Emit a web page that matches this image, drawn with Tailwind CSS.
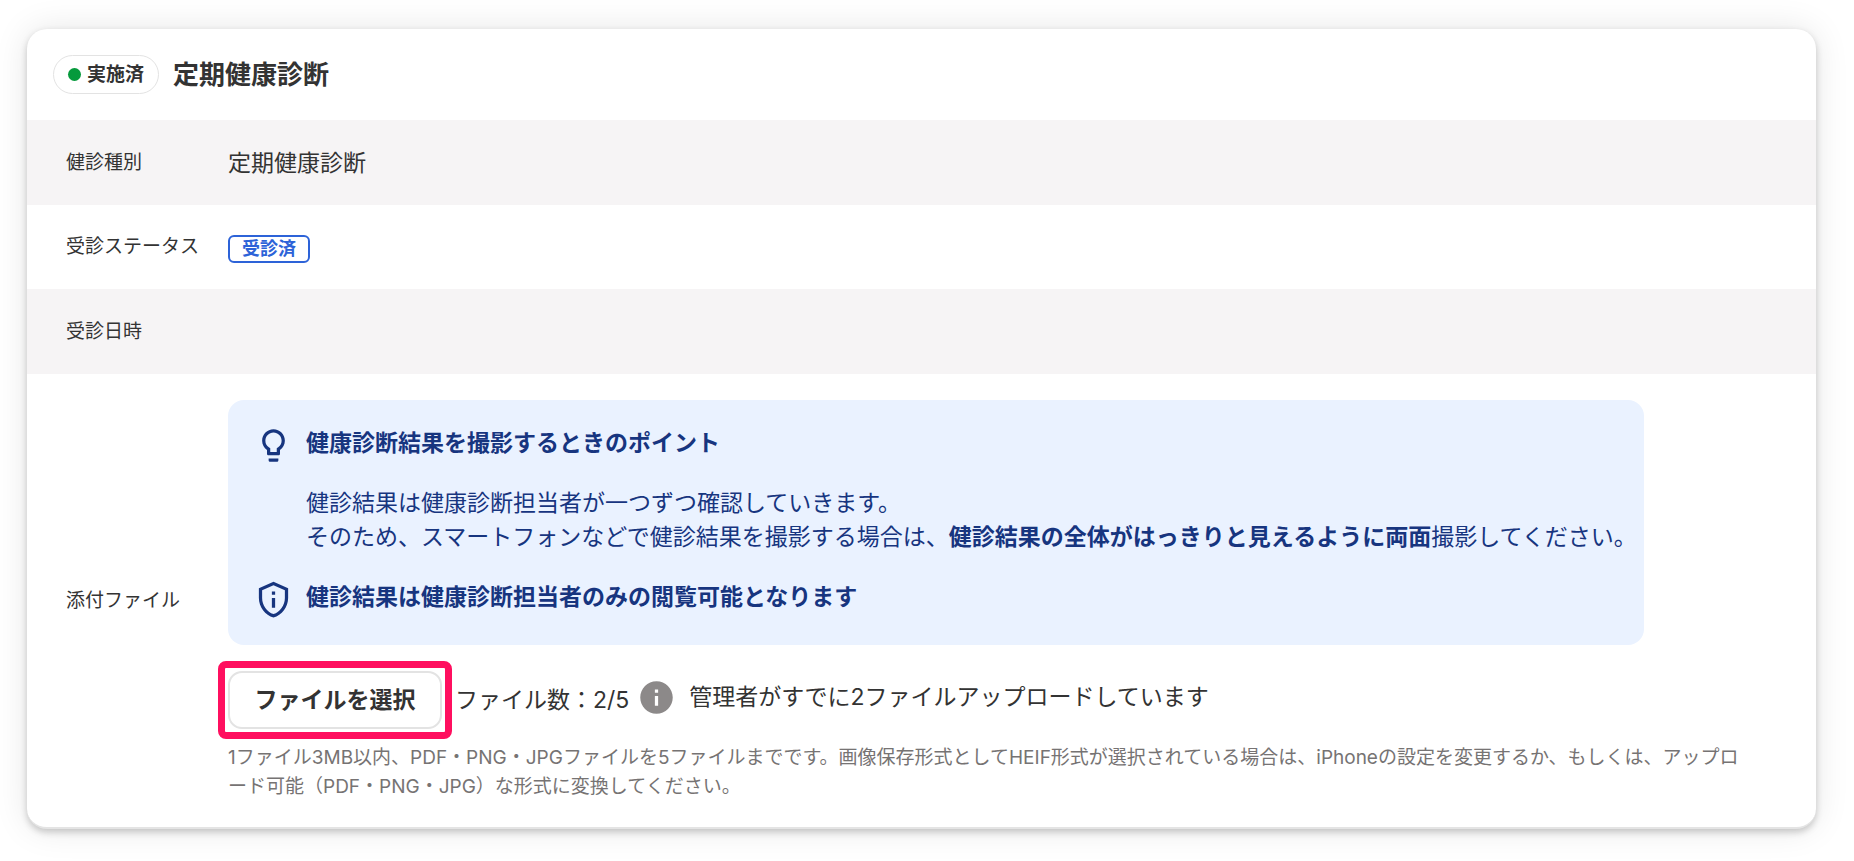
<!DOCTYPE html>
<html lang="ja">
<head>
    <meta charset="UTF-8">
    <meta name="viewport" content="width=device-width, initial-scale=1.0">
    <title>定期健康診断</title>
    <script src="https://cdn.jsdelivr.net/npm/@tailwindcss/browser@4"></script>
</head>
<body class="bg-white text-[#333] text-[23px] leading-[34px] font-['Inter','Noto_Sans_CJK_JP',sans-serif]">
    <main class="pt-[29px] pl-[27px] pr-[38px] pb-8">
        <section class="bg-white rounded-[20px] border-b-2 border-[#e4e4e4] overflow-hidden shadow-[0_3px_7px_rgba(0,0,0,0.2),0_0_34px_rgba(0,0,0,0.1)]">
            <!-- Header -->
            <header class="flex items-center gap-[14px] h-[91px] px-[26px]">
                <span class="flex items-center gap-[6px] h-[39px] px-[14px] border border-[#e3e3e3] rounded-full text-[19px] font-bold">
                    <span class="size-[13px] rounded-full bg-[#069a3c]"></span>
                    実施済
                </span>
                <h1 class="text-[26px] font-bold">定期健康診断</h1>
            </header>

            <!-- Details -->
            <table class="w-full text-left">
                <tbody>
                    <tr class="h-[85px] bg-[#f6f4f5]">
                        <th scope="row" class="w-[201px] pl-[39px] text-[19px] font-normal whitespace-nowrap">健診種別</th>
                        <td class="pr-[26px]">定期健康診断</td>
                    </tr>
                    <tr class="h-[84px]">
                        <th scope="row" class="pl-[39px] text-[19px] font-normal whitespace-nowrap">受診ステータス</th>
                        <td class="pr-[26px] pt-1">
                            <span class="flex w-fit items-center h-[28px] px-3 border-2 border-[#2d63d8] rounded-md text-[18px] font-bold text-[#2d63d8]">受診済</span>
                        </td>
                    </tr>
                    <tr class="h-[85px] bg-[#f6f4f5]">
                        <th scope="row" class="pl-[39px] text-[19px] font-normal whitespace-nowrap">受診日時</th>
                        <td></td>
                    </tr>
                    <tr>
                        <th scope="row" class="pl-[39px] text-[19px] font-normal whitespace-nowrap">添付ファイル</th>
                        <td class="py-[26px] pr-[26px]">
                            <!-- Tips -->
                            <div class="w-full max-w-[1416px] py-[26px] pl-[26px] pr-1 rounded-2xl bg-[#eaf2ff] text-[#17357f]">
                                <div class="flex items-start gap-[13px]">
                                    <svg class="size-[39px] shrink-0" viewBox="0 0 24 24" fill="currentColor" aria-hidden="true">
                                        <path d="M9 21c0 .55.45 1 1 1h4c.55 0 1-.45 1-1v-1H9v1zm3-19C8.14 2 5 5.14 5 9c0 2.38 1.19 4.47 3 5.74V17c0 .55.45 1 1 1h6c.55 0 1-.45 1-1v-2.26c1.81-1.27 3-3.36 3-5.74 0-3.86-3.14-7-7-7zm2.85 11.1l-.85.6V16h-4v-2.3l-.85-.6A4.997 4.997 0 0 1 7 9c0-2.76 2.24-5 5-5s5 2.24 5 5c0 1.63-.8 3.16-2.15 4.1z"/>
                                    </svg>
                                    <h2 class="font-bold">健康診断結果を撮影するときのポイント</h2>
                                </div>
                                <p class="mt-[21px] ml-[52px]">
                                    健診結果は健康診断担当者が一つずつ確認していきます。<br>
                                    そのため、スマートフォンなどで健診結果を撮影する場合は、<strong>健診結果の全体がはっきりと見えるように両面</strong>撮影してください。
                                </p>
                                <div class="flex items-start gap-[13px] mt-[26px]">
                                    <svg class="size-[39px] shrink-0" viewBox="0 0 24 24" fill="currentColor" aria-hidden="true">
                                        <path d="M12 1L3 5v6c0 5.55 3.84 10.74 9 12 5.16-1.26 9-6.45 9-12V5l-9-4zm7 10c0 4.52-2.98 8.69-7 9.93-4.02-1.24-7-5.41-7-9.93V6.3l7-3.11 7 3.11V11zm-8 0h2v6h-2v-6zm0-4h2v2h-2V7z"/>
                                    </svg>
                                    <h2 class="font-bold">健診結果は健康診断担当者のみの閲覧可能となります</h2>
                                </div>
                            </div>

                            <!-- File select -->
                            <div class="flex items-center mt-[26px]">
                                <div class="relative">
                                    <button type="button" class="h-[58px] w-[214px] border-2 border-[#e3e3e3] rounded-[14px] bg-white font-bold cursor-pointer">ファイルを選択</button>
                                    <div class="absolute -inset-[10px] border-[7px] border-[#ff0f5f] rounded-lg pointer-events-none"></div>
                                </div>
                                <span class="ml-[13px]">ファイル数：2/5</span>
                                <div class="flex items-center gap-[13px] ml-2 pb-[6px]">
                                    <svg class="size-[39px] shrink-0" viewBox="0 0 24 24" fill="#8c8989" aria-hidden="true">
                                        <path d="M12 2C6.48 2 2 6.48 2 12s4.48 10 10 10 10-4.48 10-10S17.52 2 12 2zm1 15h-2v-6h2v6zm0-8h-2V7h2v2z"/>
                                    </svg>
                                    <span>管理者がすでに2ファイルアップロードしています</span>
                                </div>
                            </div>
                            <p class="mt-[14px] pr-9 text-[19px] leading-[29px] text-[#767373] break-all">1ファイル3MB以内、PDF・PNG・JPGファイルを5ファイルまでです。画像保存形式としてHEIF形式が選択されている場合は、iPhoneの設定を変更するか、もしくは、アップロード可能（PDF・PNG・JPG）な形式に変換してください。</p>
                        </td>
                    </tr>
                </tbody>
            </table>
        </section>
    </main>
</body>
</html>
